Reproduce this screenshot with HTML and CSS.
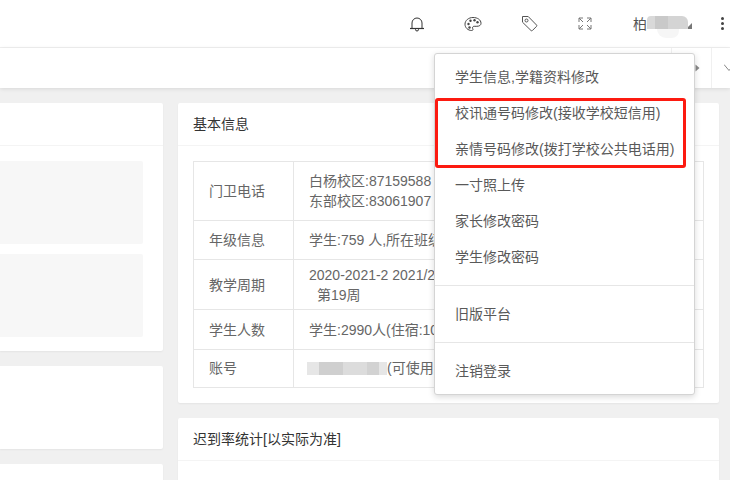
FILE: index.html
```html
<!DOCTYPE html>
<html lang="zh-CN">
<head>
<meta charset="utf-8">
<title>学生信息</title>
<link rel="stylesheet" href="styles.css">
</head>
<body>
<header class="topbar">
  <span class="tool tool-bell">
    <svg width="16" height="16" viewBox="0 0 16 16" fill="none" stroke="#333" stroke-width="1"><path d="M3 12.500V7a5 5 0 0 1 10 0v5.500"/><path d="M1 12.500h14" stroke-width="1.200"/><path d="M6.500 13v.5a1.500 1.500 0 0 0 3 0V13"/></svg>
  </span>
  <span class="tool">
    <svg width="18" height="16" viewBox="0 0 18 16" fill="none" stroke="#444" stroke-width="1"><path d="M9 1.500C4.500 1.500 1 4.500 1 8.200c0 3.500 3 6.300 6.600 6.300 1.500 0 1.600-1 1.100-1.900-.6-1.100.1-2.300 1.500-2.300h2.600c2.400 0 4.200-1 4.200-3C17 3.800 13.500 1.500 9 1.500z"/><circle cx="4.500" cy="8" r="1.200" fill="#444" stroke="none"/><circle cx="6.500" cy="4.800" r="1.200" fill="#444" stroke="none"/><circle cx="10.500" cy="4.200" r="1.200" fill="#444" stroke="none"/><circle cx="13.500" cy="6.300" r="1.200" fill="#444" stroke="none"/><circle cx="5.500" cy="11.500" r="1.200" fill="#444" stroke="none"/></svg>
  </span>
  <span class="tool">
    <svg width="17" height="17" viewBox="0 0 17 17" fill="none" stroke="#555" stroke-width="1"><path d="M1.500 1.500h5.700l8.300 8.500a1 1 0 0 1 0 1.400l-4.100 4.100a1 1 0 0 1-1.400 0L1.500 7.200z" stroke-linejoin="round"/><circle cx="5.500" cy="5.500" r="1.500"/></svg>
  </span>
  <span class="tool">
    <svg width="14" height="13" viewBox="0 0 14 13" fill="none" stroke="#777" stroke-width="1"><path d="M5 1H1v4M1 1l4 4M9 1h4v4M13 1L9 5M5 12H1V8M1 12l4-4M9 12h4V8M13 12L9 8"/></svg>
  </span>
  <span class="user">
    <span class="user-name">柏</span><span class="mosaic mosaic-user"></span><span class="user-caret"></span>
  </span>
  <span class="more"><i></i><i></i><i></i></span>
</header>

<nav class="tabs">
  <span class="tab-btn">
    <svg width="5" height="8" viewBox="0 0 5 8"><path d="M0.500 0.500l4 3.500-4 3.500z" fill="#888"/></svg>
  </span>
  <span class="tab-btn tab-btn-last">
    <svg width="10" height="8" viewBox="0 0 10 8" fill="none" stroke="#888"><path d="M0 0.500l5 6 5-6"/></svg>
  </span>
</nav>

<main class="content">
  <div class="col">
    <section class="card card-a">
      <div class="card-head"></div>
      <div class="card-body">
        <div class="block"></div>
        <div class="block"></div>
      </div>
    </section>
    <section class="card card-b"></section>
    <section class="card card-c"></section>
  </div>
  <div class="col">
    <section class="card">
      <div class="card-head">基本信息</div>
      <div class="card-body card-body-table">
        <table class="info">
          <tr class="r1"><th>门卫电话</th><td>白杨校区:87159588<br>东部校区:83061907</td></tr>
          <tr class="r2"><th>年级信息</th><td>学生:759 人,所在班级:42 人</td></tr>
          <tr class="r3"><th>教学周期</th><td>2020-2021-2 2021/2/22 - 2021/7/10<br><span class="indent">第19周</span></td></tr>
          <tr class="r4"><th>学生人数</th><td>学生:2990人(住宿:1024人)</td></tr>
          <tr class="r5"><th>账号</th><td class="acct"><span class="mosaic mosaic-acct"></span>(可使用</td></tr>
        </table>
      </div>
    </section>
    <section class="card card-d">
      <div class="card-head">迟到率统计[以实际为准]</div>
    </section>
  </div>
</main>

<div class="menu">
  <a class="menu-item">学生信息,学籍资料修改</a>
  <a class="menu-item">校讯通号码修改(接收学校短信用)</a>
  <a class="menu-item">亲情号码修改(拨打学校公共电话用)</a>
  <a class="menu-item">一寸照上传</a>
  <a class="menu-item">家长修改密码</a>
  <a class="menu-item">学生修改密码</a>
  <div class="menu-sep"></div>
  <a class="menu-item">旧版平台</a>
  <div class="menu-sep"></div>
  <a class="menu-item">注销登录</a>
</div>
<div class="highlight"></div>
</body>
</html>
```
FILE: styles.css
```css
* { box-sizing: border-box; }
html, body { margin: 0; padding: 0; }
body {
  width: 730px;
  height: 480px;
  overflow: hidden;
  background: #f0f0f0;
  color: #595959;
  font: 14px/20px "Liberation Sans", "Noto Sans CJK SC", sans-serif;
}
.topbar {
  height: 48px;
  background: #fff;
  border-bottom: 1px solid #f0f0f0;
  display: flex;
  align-items: center;
  padding-left: 389px;
}
.tool {
  width: 56px;
  height: 48px;
  display: flex;
  align-items: center;
  justify-content: center;
}
.tool svg { display: block; }
.user {
  display: flex;
  align-items: center;
  width: 105px;
  padding-left: 20px;
  height: 47px;
}
.user-name { color: #555; }
.mosaic { display: block; }
.mosaic-user {
  position: relative;
  width: 41px;
  height: 13px;
  margin-top: -2px;
  background: linear-gradient(90deg, #d9d9d9 0 20%, #c9c9c9 20% 50%, #d4d4d4 50% 100%);
  border-radius: 4px 6px 0 0;
}
.mosaic-user::after {
  content: "";
  position: absolute;
  left: 10px;
  top: 13px;
  width: 22px;
  height: 9px;
  background: #f6f6f6;
  border-radius: 0 0 8px 10px;
}
.user-caret {
  width: 0;
  height: 0;
  margin-left: -2px;
  margin-top: 5px;
  border-left: 6px solid transparent;
  border-bottom: 6px solid #777;
}
.more {
  width: 6px;
  margin-left: 1px;
  display: flex;
  flex-direction: column;
  gap: 2px;
  align-items: center;
}
.more i { display: block; width: 3px; height: 3px; background: #444; border-radius: 50%; }

.tabs {
  height: 40px;
  background: #fff;
  box-shadow: 0 1px 4px rgba(0, 0, 0, .1);
  display: flex;
  justify-content: flex-end;
  position: relative;
}
.tab-btn {
  width: 40px;
  border-left: 1px solid #f0f0f0;
  display: flex;
  align-items: center;
  justify-content: center;
  padding-left: 12px;
}
.tab-btn-last {
  width: 19px;
  padding-left: 12px;
  justify-content: flex-start;
  overflow: hidden;
}
.tab-btn-last svg { flex: none; }

.content {
  display: grid;
  grid-template-columns: 163px 541px;
  gap: 15px;
  padding-top: 15px;
  height: 392px;
  overflow: hidden;
}
.col { display: flex; flex-direction: column; gap: 15px; min-width: 0; }
.card {
  background: #fff;
  border-radius: 0 2px 2px 0;
  box-shadow: 0 1px 2px rgba(0, 0, 0, .05);
  flex: none;
}
.col + .col .card { border-radius: 2px; }
.card-head {
  height: 43px;
  padding: 11px 15px 0;
  color: #333;
  border-bottom: 1px solid #f4f4f4;
}
.card-body { padding: 15px 20px 14px 0; display: flex; flex-direction: column; gap: 10px; }
.block { height: 83px; background: #f7f7f7; border-radius: 0 2px 2px 0; }
.card-b { height: 83px; }
.card-c { height: 60px; }
.card-d { height: 80px; }
.card-body-table { display: block; padding: 15px 15px 15px; }

.info {
  width: 511px;
  table-layout: fixed;
  border-collapse: collapse;
  border: 1px solid #e6e6e6;
}
.info th, .info td {
  border: 1px solid #e6e6e6;
  padding: 0 15px;
  text-align: left;
  font-weight: 400;
  color: #666;
  white-space: nowrap;
  overflow: hidden;
}
.info th { width: 100px; }
.r1 { height: 59px; }
.r2 { height: 39px; }
.r3 { height: 50px; }
.r4 { height: 40px; }
.r5 { height: 38px; }
.r5 th, .info .acct { padding-bottom: 2px; }
.indent { padding-left: 8px; }
.info .acct { padding-left: 13px; }
.mosaic-acct {
  display: inline-block;
  width: 80px;
  height: 13px;
  vertical-align: -2px;
  background: linear-gradient(90deg, #e6e6e6 0 15%, #cfcfcf 15% 45%, #dcdcdc 45% 75%, #d2d2d2 75% 90%, #e6e6e6 90% 100%);
}

.menu {
  position: absolute;
  left: 434px;
  top: 53px;
  width: 261px;
  padding: 5px 0;
  background: #fff;
  border: 1px solid #d4d4d4;
  border-radius: 3px;
  box-shadow: 0 2px 6px rgba(0, 0, 0, .15);
}
.menu-item {
  display: block;
  height: 36px;
  line-height: 36px;
  padding-left: 20px;
  color: #595959;
  white-space: nowrap;
}
.menu-sep { height: 1px; margin: 10px 0; background: #e6e6e6; }
.highlight {
  position: absolute;
  left: 435px;
  top: 98px;
  width: 251px;
  height: 70px;
  border: 3px solid #fc1a10;
  border-radius: 3px;
}
```
